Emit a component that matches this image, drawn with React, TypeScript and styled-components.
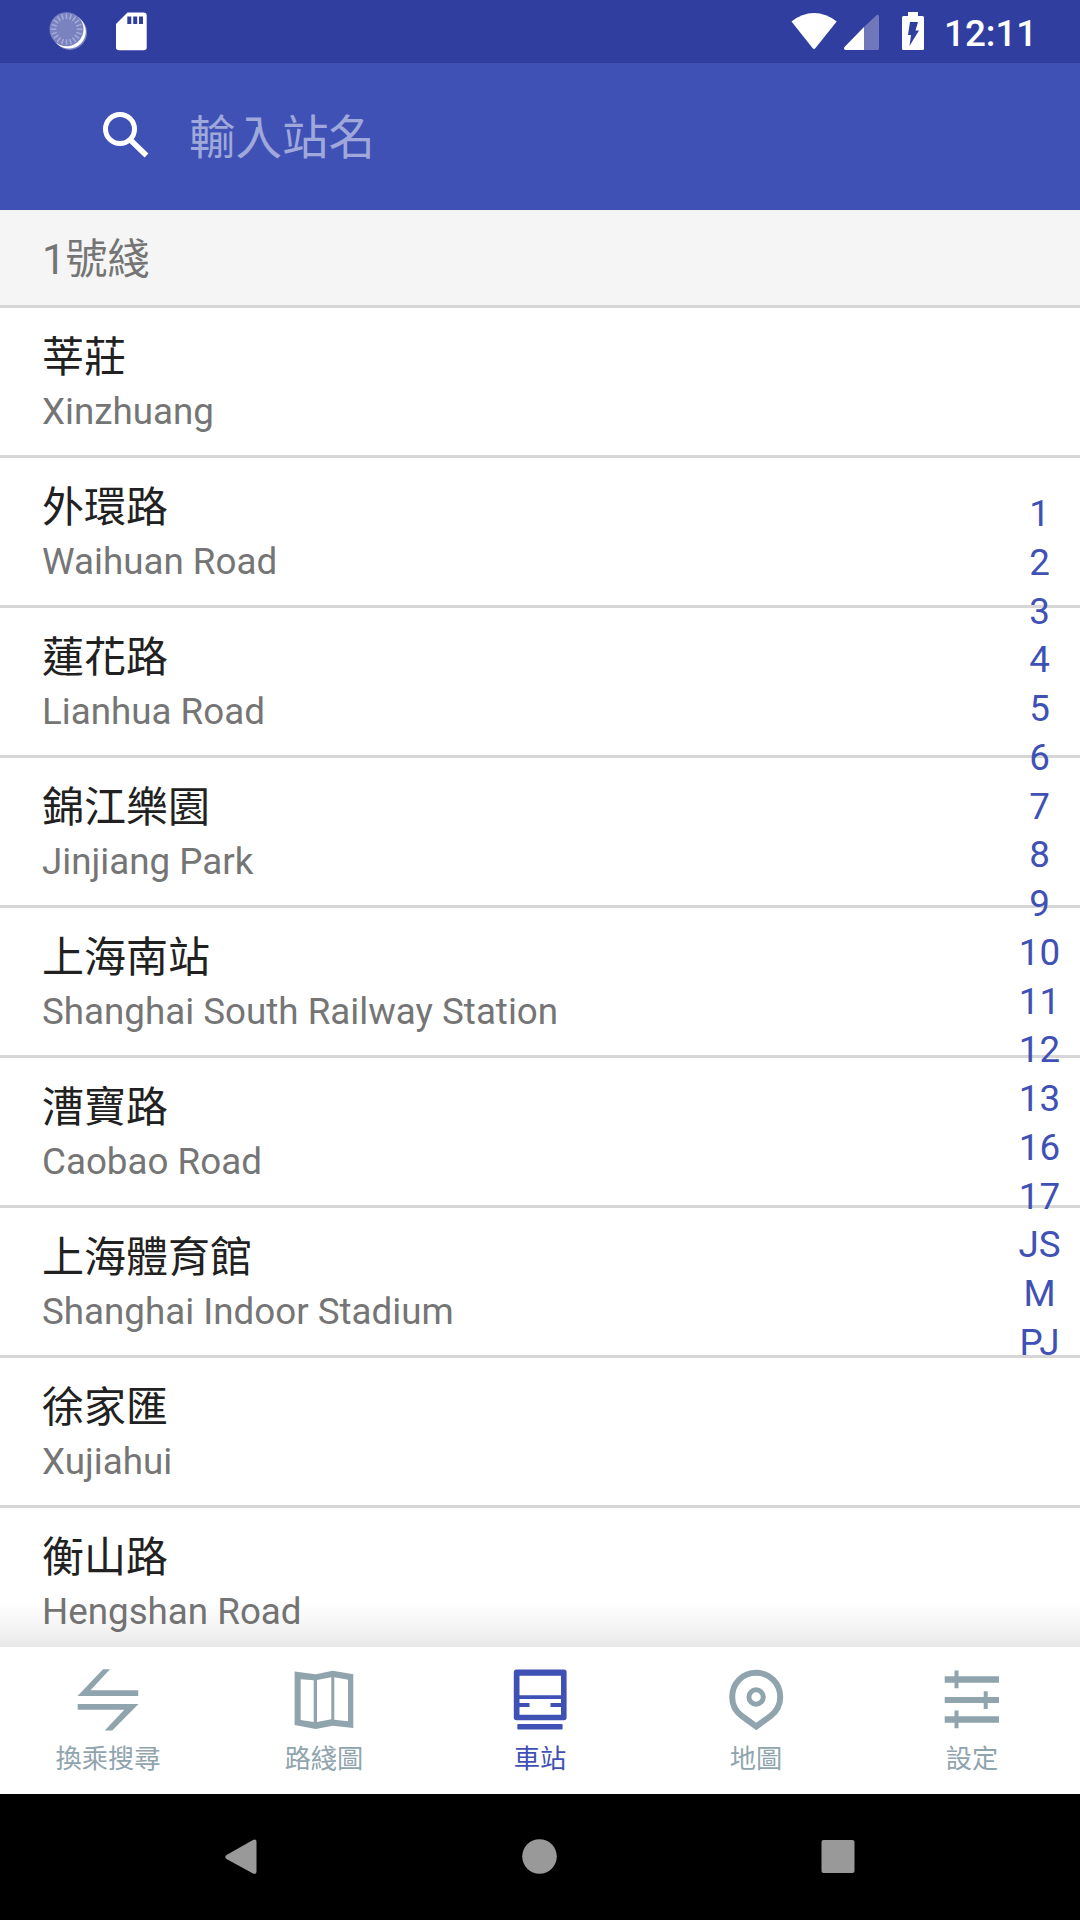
import React from "react";
import styled, { createGlobalStyle } from "styled-components";

const GlobalStyle = createGlobalStyle`
  * { box-sizing: border-box; }
  body { margin: 0; background: #fff; }
`;

const Screen = styled.div`
  width: 1080px;
  height: 1920px;
  display: flex;
  flex-direction: column;
  overflow: hidden;
  background: #fff;
  font-family: Roboto, "Noto Sans CJK TC", sans-serif;
`;

const StatusBar = styled.header`
  height: 63px;
  flex: none;
  display: flex;
  justify-content: space-between;
  align-items: flex-start;
  background: #303f9f;
  color: #fff;
`;

const StatusGroup = styled.div`
  display: flex;
  height: 63px;
`;

const Clock = styled.time`
  width: 136px;
  padding-top: 2px;
  font-size: 36.75px;
  line-height: 63px;
  font-weight: 500;
`;

const SearchBar = styled.div`
  height: 147px;
  flex: none;
  display: flex;
  align-items: center;
  padding: 0 100px;
  background: #3f51b5;
`;

const SearchInput = styled.span`
  margin-left: 36px;
  padding-top: 3px;
  font-size: 46.5px;
  line-height: 56px;
  color: #9fa8da;
`;

const Content = styled.main`
  position: relative;
  flex: 1;
  min-height: 0;
  overflow: hidden;
`;

const SectionHeader = styled.h2`
  height: 98px;
  margin: 0;
  padding: 22px 42px 0;
  font-size: 42px;
  line-height: 56px;
  font-weight: 400;
  color: #757575;
  background: #f5f5f5;
  border-bottom: 3px solid #d6d6d6;
`;

const StationList = styled.ul`
  list-style: none;
  margin: 0;
  padding: 0;
`;

const StationRow = styled.li`
  height: 150px;
  padding: 22px 42px 0;
  border-bottom: 3px solid #d6d6d6;
`;

const StationName = styled.div`
  font-size: 42px;
  line-height: 56px;
  color: #212121;
`;

const StationLatin = styled.div`
  font-size: 36.75px;
  line-height: 52px;
  color: #757575;
`;

const LineIndex = styled.nav`
  position: absolute;
  top: 280px;
  right: 0;
  width: 81px;
  display: flex;
  flex-direction: column;
`;

const IndexEntry = styled.span`
  height: 48.75px;
  line-height: 48.75px;
  font-size: 36.75px;
  text-align: center;
  color: #3f51b5;
`;

const BottomShade = styled.div`
  position: absolute;
  left: 0;
  right: 0;
  bottom: 0;
  height: 47px;
  background: linear-gradient(rgba(0, 0, 0, 0), rgba(0, 0, 0, 0.035) 50%, rgba(0, 0, 0, 0.09));
`;

const TabBar = styled.nav`
  height: 147px;
  flex: none;
  display: flex;
  background: #fff;
`;

const Tab = styled.div<{ $active?: boolean }>`
  flex: 1;
  display: flex;
  flex-direction: column;
  align-items: center;
  padding-top: 21px;
  color: ${(p) => (p.$active ? "#3f51b5" : "#90a4ae")};
`;

const TabLabel = styled.span`
  margin-top: 9px;
  font-size: 26.25px;
  line-height: 36px;
`;

const SystemNav = styled.footer`
  height: 126px;
  flex: none;
  display: flex;
  justify-content: space-between;
  padding: 0 193px;
  background: #000;
`;

const Glyph = styled.svg`
  display: block;
  flex: none;
`;

const stations = [
  ["莘莊", "Xinzhuang"],
  ["外環路", "Waihuan Road"],
  ["蓮花路", "Lianhua Road"],
  ["錦江樂園", "Jinjiang Park"],
  ["上海南站", "Shanghai South Railway Station"],
  ["漕寶路", "Caobao Road"],
  ["上海體育館", "Shanghai Indoor Stadium"],
  ["徐家匯", "Xujiahui"],
  ["衡山路", "Hengshan Road"],
];

const lines = ["1", "2", "3", "4", "5", "6", "7", "8", "9", "10", "11", "12", "13", "16", "17", "JS", "M", "PJ"];

const TransferIcon = () => (
  <Glyph width="64" height="64" fill="currentColor">
    <path d="M27 1.3H34L14.500 22.200H62.200V28H1.500ZM1.700 36H62.500L36.300 62.500H28.700L48.300 41.800H1.700Z" />
  </Glyph>
);

const MapIcon = () => (
  <Glyph width="64" height="64" fill="currentColor" fillRule="evenodd">
    <path d="M2.600 3.500L23.700 6.200L40.700 2.700L61.300 6.300V60L40.700 57.700L23.700 61L2.600 57ZM8.700 11.300V52L21.700 54V12.300ZM25 12V54L39.300 51.300V9.300ZM42.300 9.300V51.700L56 53.300V11.700Z" />
  </Glyph>
);

const TrainIcon = () => (
  <Glyph width="64" height="64" fill="currentColor" fillRule="evenodd">
    <path d="M8.500 1.500H56Q58.600 1.500 58.600 4V49.500Q58.600 52.300 56 52.300H8.500Q5.800 52.300 5.800 49.500V4Q5.800 1.500 8.500 1.500ZM11.500 7.800V27.300H53V7.800ZM11.500 31V35H21.500V39H11.500V46.700H53V39H42.500V35H53V31Z" />
    <rect x="9.300" y="56" width="45.300" height="5.600" rx="1" />
  </Glyph>
);

const PinIcon = () => (
  <Glyph width="64" height="64" fill="none" stroke="currentColor">
    <path d="M32.300 58.500L17.500 47.800C9.800 42 8.200 35 8.200 29C8.200 15 19 4.800 32.100 4.800S56.200 15 56.200 29C56.200 35 54.500 42 46.800 47.800Z" strokeWidth="6" />
    <circle cx="32.100" cy="29" r="7.200" strokeWidth="5" />
  </Glyph>
);

const TunerIcon = () => (
  <Glyph width="64" height="64" fill="currentColor">
    <path d="M4.700 8.300H59V14.700H4.700ZM4.700 29H59V35H4.700ZM4.700 48.300H59V54.700H4.700Z" />
    <path d="M14.500 2.500H18.500V20.300H14.500ZM43.700 23.200H47.700V41H43.700ZM14.500 42.500H18.500V60.300H14.500Z" />
  </Glyph>
);

const SyncIcon = () => (
  <Glyph width="94" height="63" viewBox="0 0 94 63">
    <circle cx="69.800" cy="32.700" r="17.200" fill="#7a83c0" />
    <circle cx="68.800" cy="31.500" r="17" fill="#fff" />
    <circle cx="66.500" cy="29.200" r="17" fill="#7a83c0" />
    {Array.from({ length: 20 }, (_, i) => (
      <path key={i} d="M66.500 13.500V19" stroke="#a5abd6" strokeWidth="1.500" transform={`rotate(${i * 18} 66.500 29.200)`} />
    ))}
  </Glyph>
);

const SdCardIcon = () => (
  <Glyph width="60" height="63" viewBox="94 0 60 63">
    <path d="M127.500 12.500H143.500Q146.700 12.500 146.700 15.500V47.500Q146.700 50.300 143.500 50.300H119Q116 50.300 116 47.500V24Z" fill="#fff" />
    <path d="M127.300 16.500H131.300V24H127.300ZM133.200 16.500H137.200V24H133.200ZM139 16.500H143V24H139Z" fill="#303f9f" />
  </Glyph>
);

const StatusIcons = () => (
  <Glyph width="155" height="63" viewBox="789 0 155 63">
    <path d="M791.500 21.500Q802 13 814 13T836.700 21.500L815.500 48Q814 49.800 812.500 48Z" fill="#fff" />
    <path d="M864 27L876.500 15.300Q879 14 879 16.500V48.500Q879 50 877.500 50H864Z" fill="#7078bb" />
    <path d="M864 27V50H845.500Q843 49 844.500 47Z" fill="#fff" />
    <path d="M908 12H918V16H922.500Q924 16 924 17.500V48.500Q924 50 922.500 50H903.500Q902 50 902 48.500V17.500Q902 16 903.500 16H908Z" fill="#fff" />
    <path d="M910 22H918L915.500 30.500H919L909.500 46L911 35H908Z" fill="#303f9f" />
  </Glyph>
);

const SearchIcon = () => (
  <Glyph width="53" height="63" viewBox="100 105 53 63" fill="none" stroke="#fff">
    <circle cx="120" cy="129" r="14.500" strokeWidth="5" />
    <path d="M130.500 140L132.500 142L146.500 155.500" strokeWidth="5.500" />
  </Glyph>
);

const tabs = [
  { label: "換乘搜尋", icon: <TransferIcon /> },
  { label: "路綫圖", icon: <MapIcon /> },
  { label: "車站", icon: <TrainIcon />, active: true },
  { label: "地圖", icon: <PinIcon /> },
  { label: "設定", icon: <TunerIcon /> },
];

export default function App() {
  return (
    <Screen lang="zh-Hant">
      <GlobalStyle />
      <StatusBar>
        <StatusGroup>
          <SyncIcon />
          <SdCardIcon />
        </StatusGroup>
        <StatusGroup>
          <StatusIcons />
          <Clock>12:11</Clock>
        </StatusGroup>
      </StatusBar>
      <SearchBar>
        <SearchIcon />
        <SearchInput>輸入站名</SearchInput>
      </SearchBar>
      <Content>
        <SectionHeader>1號綫</SectionHeader>
        <StationList>
          {stations.map(([name, latin]) => (
            <StationRow key={latin}>
              <StationName>{name}</StationName>
              <StationLatin>{latin}</StationLatin>
            </StationRow>
          ))}
        </StationList>
        <LineIndex>
          {lines.map((l) => (
            <IndexEntry key={l}>{l}</IndexEntry>
          ))}
        </LineIndex>
        <BottomShade />
      </Content>
      <TabBar>
        {tabs.map((t) => (
          <Tab key={t.label} $active={t.active}>
            {t.icon}
            <TabLabel>{t.label}</TabLabel>
          </Tab>
        ))}
      </TabBar>
      <SystemNav>
        <Glyph width="96" height="126" viewBox="193 0 96 126" fill="#999">
          <path d="M226.500 61L253 46Q256.500 44.500 256.500 48V77.500Q256.500 81 253 79.500L226.500 65Q224 63 226.500 61Z" />
        </Glyph>
        <Glyph width="96" height="126" viewBox="492 0 96 126" fill="#999">
          <circle cx="539.500" cy="62.500" r="17.300" />
        </Glyph>
        <Glyph width="96" height="126" viewBox="791 0 96 126" fill="#999">
          <rect x="821.500" y="46" width="33" height="33" rx="2" />
        </Glyph>
      </SystemNav>
    </Screen>
  );
}
